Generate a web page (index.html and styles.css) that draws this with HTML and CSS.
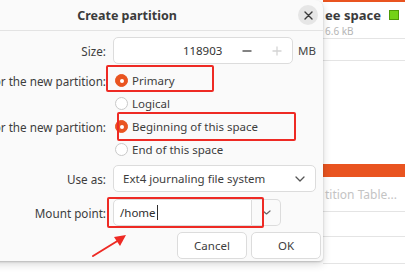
FILE: index.html
```html
<!DOCTYPE html>
<html lang="en">
<head>
<meta charset="utf-8">
<title>Create partition</title>
<link rel="stylesheet" href="styles.css">
</head>
<body>
<div class="screen">
  <div class="dialog">
    <header class="dlg-head">
      <span class="head-spacer"></span>
      <h1 class="dlg-title">Create partition</h1>
      <button class="close-btn" aria-label="Close">
        <svg width="9" height="9" viewBox="0 0 9 9"><path d="M1 1 L8 8 M8 1 L1 8" stroke="#3a3a3a" stroke-width="1.4" stroke-linecap="round" fill="none"/></svg>
      </button>
    </header>

    <div class="form">
      <div class="row row-size">
        <div class="label">Size:</div>
        <div class="ctrl">
          <div class="spin">
            <span class="spin-val">118903</span>
            <span class="spin-btn" aria-label="decrease">
              <svg width="10" height="2" viewBox="0 0 10 2"><path d="M0.5 1 H9.5" stroke="#5a5a5a" stroke-width="1.5"/></svg>
            </span>
            <span class="spin-btn" aria-label="increase">
              <svg width="10" height="10" viewBox="0 0 10 10"><path d="M0.5 5 H9.5 M5 0.5 V9.5" stroke="#d4d4d4" stroke-width="1.3"/></svg>
            </span>
          </div>
          <span class="unit">MB</span>
        </div>
      </div>

      <div class="row row-radio first-radio">
        <div class="label">Type for the new partition:</div>
        <div class="ctrl"><span class="radio on"></span><span class="opt">Primary</span></div>
      </div>
      <div class="row row-radio">
        <div class="label"></div>
        <div class="ctrl"><span class="radio"></span><span class="opt">Logical</span></div>
      </div>
      <div class="row row-radio">
        <div class="label">Location for the new partition:</div>
        <div class="ctrl"><span class="radio on"></span><span class="opt">Beginning of this space</span></div>
      </div>
      <div class="row row-radio">
        <div class="label"></div>
        <div class="ctrl"><span class="radio"></span><span class="opt">End of this space</span></div>
      </div>

      <div class="row row-combo">
        <div class="label">Use as:</div>
        <div class="ctrl">
          <div class="combo">
            <span class="combo-val">Ext4 journaling file system</span>
            <svg class="chev" width="10" height="6" viewBox="0 0 10 6"><path d="M1 1 L5 5 L9 1" stroke="#555" stroke-width="1.3" fill="none" stroke-linecap="round" stroke-linejoin="round"/></svg>
          </div>
        </div>
      </div>

      <div class="row row-mount">
        <div class="label">Mount point:</div>
        <div class="ctrl">
          <div class="mount">
            <span class="mount-val">/home<span class="caret"></span></span>
            <span class="mount-btn">
              <svg width="9" height="5" viewBox="0 0 9 5"><path d="M1 1 L4.5 4 L8 1" stroke="#666" stroke-width="1.2" fill="none" stroke-linecap="round" stroke-linejoin="round"/></svg>
            </span>
          </div>
        </div>
      </div>
    </div>

    <div class="actions">
      <button class="btn">Cancel</button>
      <button class="btn">OK</button>
    </div>

    <div class="mark mark-primary"></div>
    <div class="mark mark-begin"></div>
    <div class="mark mark-mount"></div>
    <svg class="arrow" width="40" height="28" viewBox="0 0 40 28">
      <path d="M2 25 L28 9" stroke="#ee2a24" stroke-width="2" stroke-linecap="round"/>
      <path d="M35 4 L23 6 L29 15 Z" fill="#ee2a24"/>
    </svg>
  </div>

  <div class="panel">
    <div class="legend">
      <div class="legend-top">
        <span class="legend-name">ee space</span>
        <span class="swatch"></span>
      </div>
      <span class="legend-sub">6.6 kB</span>
    </div>
    <div class="prow prow-a"></div>
    <div class="pspace"></div>
    <div class="pbar"></div>
    <div class="prow prow-table"><span class="ghost">tition Table...</span></div>
    <div class="prow prow-b"></div>
    <div class="prow prow-c"></div>
  </div>
</div>
</body>
</html>
```

FILE: styles.css
```css
html, body {
  margin: 0;
  padding: 0;
}

body {
  width: 405px;
  height: 275px;
  overflow: hidden;
  background: #ffffff;
  font-family: "Noto Sans", "DejaVu Sans", sans-serif;
  color: #3d3d3d;
}

.screen {
  display: flex;
  width: 405px;
  height: 275px;
}

/* ---------- dialog ---------- */
.dialog {
  flex: none;
  position: relative;
  z-index: 1;
  width: 392px;
  height: 261px;
  margin-left: -69px;
  background: #fafafa;
  border-radius: 8px 8px 4px 4px;
  box-shadow: 0 1px 2px rgba(0, 0, 0, 0.18), 0 3px 8px rgba(0, 0, 0, 0.16);
  display: flex;
  flex-direction: column;
}

.dlg-head {
  height: 30px;
  border-bottom: 1px solid #e3e3e3;
  display: grid;
  grid-template-columns: 20px 1fr 20px;
  align-items: center;
  padding: 0 5px;
}

.dlg-title {
  margin: 0;
  text-align: center;
  font-size: 12.5px;
  font-weight: 700;
  color: #3b3b3b;
}

.close-btn {
  width: 20px;
  height: 20px;
  border: none;
  border-radius: 50%;
  background: #e6e6e6;
  padding: 0;
  display: flex;
  align-items: center;
  justify-content: center;
}

.form {
  display: flex;
  flex-direction: column;
  padding-left: 12px;
}

.row {
  display: grid;
  grid-template-columns: 163px 1fr;
  column-gap: 7px;
  align-items: center;
}

.label {
  display: flex;
  justify-content: flex-end;
  white-space: nowrap;
  font-size: 11.7px;
  color: #3d3d3d;
}

.ctrl {
  display: flex;
  align-items: center;
  font-size: 11.5px;
}

/* size */
.row-size {
  margin-top: 6px;
  height: 27px;
}

.spin {
  width: 180px;
  height: 27px;
  box-sizing: border-box;
  border: 1px solid #dcdcdc;
  border-radius: 5px;
  background: #ffffff;
  display: flex;
  align-items: center;
}

.spin-val {
  width: 119px;
  box-sizing: border-box;
  padding-right: 10px;
  text-align: right;
  color: #333;
}

.spin-btn {
  width: 30px;
  height: 25px;
  display: flex;
  align-items: center;
  justify-content: center;
}

.unit {
  margin-left: 5px;
  color: #444;
}

/* radios */
.row-radio {
  height: 23px;
}

.first-radio {
  margin-top: 5px;
}

.radio {
  width: 13px;
  height: 13px;
  box-sizing: border-box;
  margin-left: 2px;
  margin-right: 4px;
  border-radius: 50%;
  border: 1px solid #c9c9c9;
  background: #ffffff;
  display: flex;
  align-items: center;
  justify-content: center;
}

.radio.on {
  border-color: #e95420;
  background: #e95420;
}

.radio.on::after {
  content: "";
  width: 4px;
  height: 4px;
  border-radius: 50%;
  background: #ffffff;
}

.opt {
  color: #3d3d3d;
}

/* combo */
.row-combo {
  margin-top: 4px;
  height: 27px;
}

.combo {
  width: 203px;
  height: 27px;
  box-sizing: border-box;
  border: 1px solid #dcdcdc;
  border-radius: 5px;
  background: #ffffff;
  display: flex;
  align-items: center;
  justify-content: space-between;
  padding: 0 10px 0 9px;
}

.combo-val {
  color: #3d3d3d;
}

/* mount point */
.row-mount {
  margin-top: 7px;
  height: 27px;
}

.mount {
  display: flex;
  height: 27px;
}

.mount-val {
  width: 139px;
  box-sizing: border-box;
  border: 1px solid #dcdcdc;
  border-radius: 5px 0 0 5px;
  background: #ffffff;
  display: flex;
  align-items: center;
  padding-left: 6px;
  color: #2e2e2e;
}

.caret {
  width: 1px;
  height: 15px;
  background: #2e2e2e;
  margin-left: 1px;
}

.mount-btn {
  width: 29px;
  box-sizing: border-box;
  border: 1px solid #dcdcdc;
  border-left: none;
  border-radius: 0 5px 5px 0;
  background: #fafafa;
  display: flex;
  align-items: center;
  justify-content: center;
}

/* buttons */
.actions {
  margin-top: 6px;
  display: flex;
  justify-content: flex-end;
  gap: 4px;
  padding-right: 2px;
}

.btn {
  width: 70px;
  height: 27px;
  border: 1px solid #dcdcdc;
  border-radius: 5px;
  background: #ffffff;
  font-family: "Noto Sans", "DejaVu Sans", sans-serif;
  font-size: 11.5px;
  color: #3d3d3d;
  padding: 0;
}

/* annotation overlays */
.mark {
  position: absolute;
  border: 2px solid #ee2a24;
  border-radius: 2px;
  box-sizing: border-box;
}

.mark-primary {
  left: 175px;
  top: 65px;
  width: 108px;
  height: 27px;
}

.mark-begin {
  left: 186px;
  top: 112px;
  width: 179px;
  height: 29px;
}

.mark-mount {
  left: 176px;
  top: 197px;
  width: 157px;
  height: 31px;
}

.arrow {
  position: absolute;
  left: 160px;
  top: 231px;
}

/* ---------- background window ---------- */
.panel {
  flex: 1;
  display: flex;
  flex-direction: column;
  background: #ffffff;
  border-top: 2px solid #e95420;
}

.legend {
  height: 37px;
  box-sizing: border-box;
  border-bottom: 1px solid #e4e4e4;
  padding: 5px 6px 0 2px;
  display: flex;
  flex-direction: column;
}

.legend-top {
  display: flex;
  align-items: center;
  justify-content: space-between;
  height: 16px;
}

.legend-name {
  font-size: 13px;
  font-weight: 700;
  color: #3b3b3b;
  white-space: nowrap;
}

.swatch {
  width: 10px;
  height: 10px;
  box-sizing: border-box;
  background: #73d216;
  border: 1px solid #4e9a06;
}

.legend-sub {
  font-size: 10px;
  color: #b5b5b5;
  margin-top: 1px;
}

.prow {
  box-sizing: border-box;
  border-bottom: 1px solid #e4e4e4;
}

.prow-a {
  height: 22px;
}

.pspace {
  height: 103px;
}

.pbar {
  height: 13px;
  background: #e95420;
}

.prow-table {
  height: 35px;
  display: flex;
  align-items: center;
  padding-left: 2px;
}

.ghost {
  font-size: 12px;
  color: #c4c4c4;
  white-space: nowrap;
}

.prow-b {
  height: 25px;
}

.prow-c {
  height: 27px;
}
```
